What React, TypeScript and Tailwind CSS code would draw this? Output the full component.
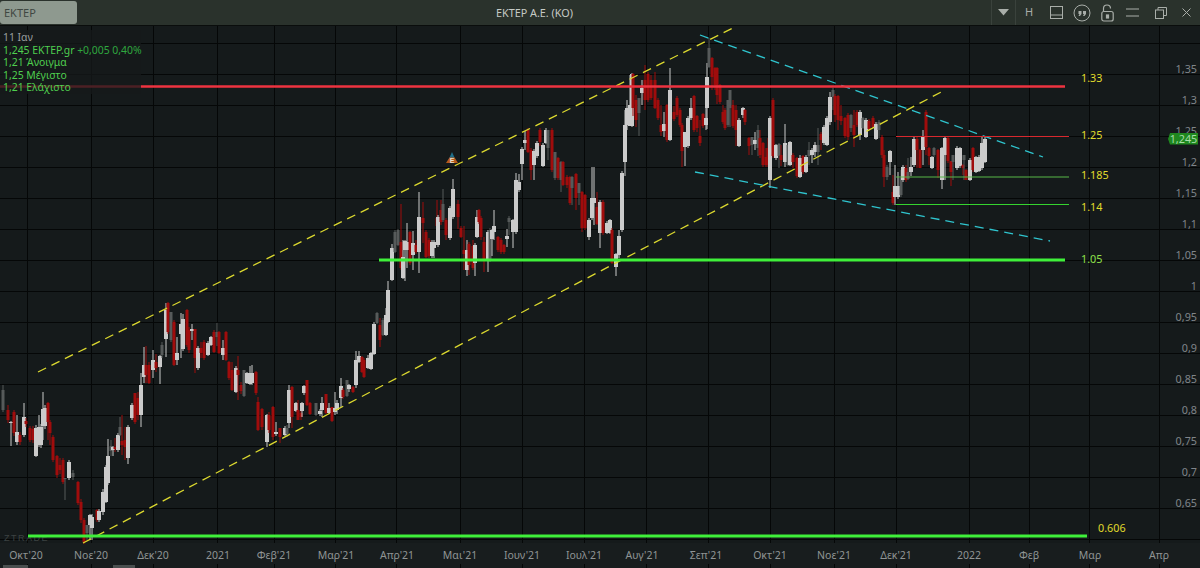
import React from "react";

type Candle = [number, number, number, "w" | "r" | "g", number?, number?];

// [x, body top, body bottom, colour, wick high, wick low], all in chart pixels
const candles: Candle[] = [
  [3, 390, 410, "g", 385, 412], [8, 410, 420, "r", 405, 423], [11, 422, 423, "w", 421, 446], [14, 412, 433, "r", 410, 436],
  [17, 432, 442, "w", 415, 445], [20, 435, 442, "r"], [24, 417, 435, "w", 403, 437], [26, 421, 424, "r"], [30, 428, 440, "r", 426, 442],
  [33, 429, 440, "r"], [36, 428, 456, "w", 425, 457], [39, 427, 445, "w", 415, 447], [41, 427, 445, "w"], [43, 409, 426, "w", 392, 440],
  [45, 408, 426, "w"], [48, 403, 422, "r", 402, 440], [50, 422, 433, "r", 420, 445], [53, 437, 460, "r", 435, 462], [57, 456, 475, "r", 455, 478],
  [60, 465, 470, "r", 458, 474], [63, 460, 482, "r", 458, 484], [65, 478, 479, "g", 478, 500], [69, 462, 478, "w", 460, 480], [73, 473, 477, "g"],
  [78, 482, 503, "r", 481, 505], [81, 502, 520, "r"], [84, 520, 542, "r", 518, 544], [87, 525, 533, "g", 525, 540], [90, 515, 525, "w", 514, 540],
  [92, 517, 528, "w", 514, 540], [97, 510, 520, "r", 509, 522], [99, 511, 520, "w", 509, 522], [103, 492, 512, "w"], [106, 467, 502, "w", 465, 503],
  [108, 456, 483, "w", 439, 485], [111, 446, 451, "g", 440, 456], [113, 447, 450, "w", 446, 456], [115, 447, 449, "r", 438, 452], [118, 435, 450, "w", 433, 452],
  [120, 427, 435, "g", 417, 436], [122, 441, 445, "r", 415, 455], [125, 440, 447, "r", 427, 460], [128, 427, 458, "w", 425, 464], [132, 405, 418, "w", 403, 420],
  [135, 393, 422, "r", 393, 424], [138, 398, 415, "r", 392, 420], [141, 385, 415, "w", 373, 427], [144, 365, 377, "w", 347, 383], [146, 365, 375, "r", 346, 383],
  [149, 365, 383, "r", 362, 384], [153, 360, 370, "w", 350, 378], [156, 362, 368, "r", 354, 372], [160, 356, 367, "w", 355, 384], [162, 345, 355, "g"],
  [166, 310, 339, "w", 303, 357], [168, 303, 332, "r", 302, 334], [171, 312, 340, "g", 312, 342], [174, 322, 365, "r", 320, 366], [177, 353, 360, "w", 337, 365],
  [181, 324, 334, "w", 313, 358], [183, 319, 349, "w", 314, 351], [187, 310, 345, "r", 309, 347], [189, 330, 350, "r"], [192, 329, 331, "w", 324, 340],
  [195, 329, 358, "r", 329, 373], [198, 348, 368, "w", 346, 370], [201, 348, 353, "r", 342, 358], [204, 342, 358, "r", 340, 360], [208, 343, 355, "w", 341, 356],
  [211, 337, 345, "w", 336, 346], [214, 332, 352, "r", 330, 353], [217, 332, 337, "g", 323, 346], [219, 332, 353, "r", 331, 354], [223, 348, 355, "w", 340, 360],
  [226, 332, 360, "r", 331, 361], [229, 362, 378, "r", 361, 380], [232, 370, 390, "r", 362, 391], [236, 368, 392, "w", 366, 393], [238, 370, 375, "r", 356, 400],
  [241, 385, 391, "r"], [244, 370, 396, "g", 370, 397], [247, 373, 383, "w", 372, 384], [250, 373, 384, "w", 366, 385], [252, 373, 383, "w", 365, 385],
  [256, 372, 393, "r", 371, 395], [258, 402, 430, "r", 397, 431], [262, 409, 427, "r", 408, 430], [267, 415, 442, "w", 414, 447], [269, 415, 430, "r"],
  [273, 407, 437, "r", 406, 440], [276, 432, 434, "w", 422, 436], [280, 428, 437, "r", 428, 443], [285, 428, 435, "w", 426, 436], [287, 428, 434, "g"],
  [289, 390, 423, "w", 385, 428], [292, 387, 417, "r", 386, 428], [296, 403, 411, "w", 402, 412], [298, 410, 420, "r", 400, 420], [301, 413, 417, "r"],
  [302, 403, 411, "w", 402, 417], [304, 386, 393, "w", 385, 395], [307, 380, 405, "r", 380, 406], [310, 403, 414, "r", 402, 415], [316, 403, 415, "g", 403, 416],
  [320, 411, 414, "w", 409, 416], [322, 403, 410, "w", 397, 417], [326, 394, 413, "r", 394, 414], [329, 408, 413, "w", 403, 414], [332, 407, 421, "r", 407, 422],
  [335, 408, 412, "w", 392, 415], [337, 403, 410, "w", 400, 414], [341, 386, 398, "w", 378, 407], [343, 390, 397, "r", 388, 399], [347, 380, 396, "g", 380, 397],
  [349, 385, 389, "w", 384, 392], [353, 387, 392, "r", 386, 393], [356, 360, 385, "w", 351, 388], [359, 356, 362, "w", 351, 363], [362, 357, 372, "r", 356, 373],
  [364, 360, 377, "r", 358, 378], [368, 358, 368, "w", 355, 369], [371, 353, 369, "w", 352, 370], [374, 324, 354, "w", 322, 355], [377, 313, 323, "g", 312, 324],
  [380, 325, 340, "r", 318, 347], [383, 320, 335, "g", 318, 336], [386, 315, 335, "w", 308, 336], [388, 290, 322, "w", 281, 323], [392, 248, 280, "w", 244, 281],
  [395, 232, 252, "g", 230, 253], [398, 230, 245, "g", 229, 246], [401, 242, 268, "r", 204, 270], [403, 257, 278, "w", 240, 279], [405, 241, 250, "w", 240, 281],
  [407, 242, 250, "w", 223, 268], [410, 232, 263, "r", 231, 265], [413, 243, 255, "w", 231, 270], [416, 245, 252, "r", 240, 254], [419, 217, 252, "w", 192, 273],
  [423, 218, 223, "r", 202, 243], [426, 232, 257, "r", 230, 258], [429, 240, 256, "r", 238, 258], [432, 242, 256, "w", 240, 258], [434, 242, 248, "w", 240, 258],
  [437, 218, 226, "r", 200, 240], [438, 217, 245, "w", 215, 247], [441, 210, 222, "r", 200, 225], [443, 204, 220, "g", 189, 222], [446, 220, 235, "r", 218, 240],
  [450, 208, 238, "w", 206, 240], [453, 189, 217, "w", 179, 219], [458, 204, 217, "r", 200, 229], [461, 228, 237, "r", 226, 238], [464, 250, 254, "r", 226, 270],
  [467, 250, 270, "w", 240, 276], [469, 244, 265, "r", 242, 275], [473, 246, 268, "r", 240, 270], [475, 245, 263, "w", 243, 276], [477, 217, 237, "w", 210, 238],
  [479, 210, 222, "r", 209, 224], [481, 218, 237, "r", 216, 240], [484, 242, 260, "r", 237, 272], [488, 232, 260, "w", 230, 272], [490, 230, 260, "g", 228, 262],
  [492, 230, 239, "w", 229, 256], [494, 226, 232, "w", 210, 240], [498, 237, 250, "r", 236, 252], [501, 240, 252, "r", 238, 254], [504, 245, 252, "r", 244, 254],
  [507, 236, 239, "w", 229, 247], [509, 218, 222, "g", 216, 235], [513, 220, 232, "w", 219, 248], [516, 180, 232, "w", 173, 234], [519, 182, 190, "w", 174, 192],
  [522, 149, 164, "w", 147, 180], [525, 140, 143, "w", 131, 150], [528, 130, 152, "r", 128, 153], [531, 150, 170, "r", 148, 180], [534, 151, 165, "w", 149, 180],
  [537, 143, 156, "w", 141, 158], [540, 130, 142, "r", 128, 146], [543, 145, 166, "w", 143, 167], [546, 130, 143, "w", 128, 144], [548, 130, 148, "g", 130, 160],
  [552, 130, 170, "r", 128, 172], [555, 152, 178, "g", 152, 180], [558, 158, 178, "r", 157, 180], [561, 162, 180, "g", 161, 192], [563, 162, 185, "r", 161, 186],
  [567, 177, 185, "r", 175, 188], [570, 177, 203, "r", 176, 205], [572, 177, 188, "g", 176, 205], [576, 174, 198, "r", 173, 210], [579, 183, 193, "g", 183, 205],
  [582, 192, 228, "r", 191, 232], [585, 195, 228, "r", 194, 230], [589, 220, 237, "w", 218, 240], [592, 198, 218, "w", 167, 220], [594, 198, 203, "w", 167, 225],
  [597, 207, 224, "r", 192, 225], [600, 202, 233, "w", 200, 248], [603, 202, 233, "r", 200, 235], [607, 223, 233, "w", 221, 234], [610, 220, 233, "w", 219, 234],
  [612, 230, 263, "r", 228, 264], [616, 254, 267, "w", 253, 276], [619, 236, 255, "w", 230, 258], [622, 173, 230, "w", 171, 232], [625, 125, 162, "w", 110, 176],
  [627, 108, 125, "w", 100, 130], [630, 105, 126, "w", 75, 126], [632, 74, 126, "w", 73, 127], [633, 74, 108, "r", 73, 116], [636, 100, 120, "r", 95, 127],
  [639, 98, 113, "g", 98, 136], [642, 88, 93, "w", 80, 105], [645, 80, 100, "r", 65, 110], [648, 74, 100, "r", 72, 102], [651, 80, 98, "r", 75, 100],
  [655, 80, 108, "r", 72, 109], [658, 100, 118, "r", 98, 120], [661, 125, 132, "r", 105, 136], [664, 124, 131, "w", 112, 137], [667, 105, 140, "r", 104, 142],
  [670, 90, 140, "w", 68, 141], [674, 112, 119, "r", 106, 121], [677, 98, 115, "r", 96, 117], [680, 110, 125, "r", 108, 127], [682, 125, 151, "r", 123, 167],
  [685, 132, 147, "w", 132, 166], [688, 118, 146, "w", 116, 148], [691, 108, 118, "w", 98, 120], [694, 96, 130, "r", 95, 132], [697, 116, 128, "r", 115, 132],
  [700, 136, 143, "r", 120, 146], [703, 114, 126, "r", 113, 128], [706, 118, 125, "w", 98, 130], [707, 77, 108, "w", 63, 129], [709, 48, 67, "g", 38, 68],
  [712, 58, 77, "r", 57, 90], [715, 68, 85, "r", 67, 90], [717, 68, 95, "r", 67, 104], [720, 85, 102, "r", 84, 104], [723, 112, 122, "r", 105, 124],
  [725, 110, 128, "r", 108, 130], [728, 100, 125, "g", 100, 127], [730, 90, 108, "g", 90, 127], [733, 105, 126, "r", 100, 128], [736, 110, 130, "r", 105, 146],
  [739, 120, 146, "w", 118, 147], [743, 108, 115, "w", 107, 118], [745, 110, 122, "r", 109, 125], [749, 138, 146, "r", 137, 155], [752, 137, 145, "g", 137, 155],
  [755, 140, 144, "w", 132, 150], [758, 130, 148, "g", 125, 156], [760, 138, 155, "r", 130, 158], [763, 143, 165, "r", 142, 167], [766, 157, 165, "r", 148, 167],
  [768, 148, 165, "r", 138, 167], [770, 118, 180, "w", 116, 188], [773, 100, 156, "r", 98, 158], [776, 145, 158, "w", 144, 160], [779, 144, 156, "g", 143, 168],
  [781, 155, 160, "r", 145, 166], [785, 143, 162, "w", 124, 167], [788, 145, 165, "g", 143, 166], [790, 142, 165, "w", 141, 166], [793, 155, 162, "r", 153, 168],
  [797, 158, 176, "r", 157, 178], [800, 158, 177, "w", 155, 178], [803, 156, 172, "r", 155, 174], [806, 157, 172, "w", 155, 173], [809, 150, 156, "g", 142, 165],
  [812, 150, 155, "w", 148, 163], [815, 145, 152, "w", 142, 157], [818, 145, 152, "g", 128, 165], [821, 134, 140, "r", 132, 150], [824, 127, 143, "w", 125, 145],
  [827, 118, 145, "w", 116, 146], [830, 97, 122, "w", 92, 125], [833, 90, 97, "g", 88, 110], [835, 96, 115, "r", 94, 122], [838, 96, 120, "r", 95, 130],
  [841, 116, 121, "r", 105, 125], [845, 118, 136, "r", 117, 138], [848, 115, 137, "r", 113, 140], [851, 115, 128, "g", 114, 132], [854, 125, 135, "r", 110, 147],
  [857, 112, 125, "r", 110, 127], [860, 112, 135, "w", 110, 140], [863, 118, 128, "g", 117, 129], [866, 120, 137, "w", 118, 138], [869, 121, 129, "r", 119, 130],
  [873, 118, 127, "r", 116, 128], [876, 124, 139, "w", 122, 140], [879, 122, 130, "g", 120, 138], [882, 137, 155, "r", 135, 158], [884, 155, 177, "r", 150, 187],
  [887, 167, 177, "g", 165, 180], [890, 151, 162, "w", 150, 175], [893, 192, 203, "r", 175, 205], [895, 186, 197, "w", 165, 205], [898, 186, 197, "w", 172, 199],
  [901, 178, 195, "g", 170, 197], [903, 167, 180, "w", 165, 182], [906, 168, 180, "r", 165, 182], [908, 172, 179, "g", 158, 180], [911, 167, 172, "w", 157, 176],
  [914, 139, 165, "w", 137, 167], [917, 139, 150, "r", 137, 168], [920, 150, 168, "r", 149, 168], [923, 137, 150, "w", 130, 165], [926, 112, 147, "r", 110, 155],
  [929, 148, 156, "r", 147, 165], [932, 157, 168, "w", 156, 169], [934, 148, 155, "g", 147, 157], [938, 150, 170, "r", 149, 178], [942, 148, 180, "w", 147, 189],
  [945, 138, 155, "w", 136, 180], [948, 138, 161, "r", 137, 163], [951, 161, 172, "r", 161, 186], [953, 155, 162, "g", 155, 180], [957, 148, 168, "w", 146, 170],
  [960, 148, 166, "w", 147, 168], [963, 165, 168, "r", 164, 175], [964, 155, 160, "g", 155, 180], [966, 170, 180, "r", 169, 180], [970, 160, 180, "w", 158, 181],
  [973, 148, 170, "r", 147, 172], [976, 157, 172, "w", 156, 173], [979, 157, 171, "w", 155, 172], [982, 143, 168, "w", 137, 170], [985, 139, 162, "w", 137, 163],
];

const candleColor = { w: "#cbcbcb", r: "#a00c0c", g: "#565a5a" };

const priceLabels = ["1,35", "1,3", "1,25", "1,2", "1,15", "1,1", "1,05", "1", "0,95", "0,9", "0,85", "0,8", "0,75", "0,7", "0,65"];
const gridY = [43, 74, 105, 136, 167, 198, 229, 260, 291, 322, 353, 384, 415, 446, 477, 508, 539];
const gridX = [27, 91, 153, 217, 274, 335, 396, 460, 522, 584, 646, 708, 770, 834, 896, 969, 1029, 1089, 1159];
const monthLabels: [number, string][] = [
  [26, "Οκτ'20"], [91, "Νοε'20"], [153, "Δεκ'20"], [218, "2021"], [274, "Φεβ'21"], [336, "Μαρ'21"], [397, "Απρ'21"], [460, "Μαι'21"],
  [522, "Ιουν'21"], [584, "Ιουλ'21"], [642, "Αυγ'21"], [706, "Σεπ'21"], [770, "Οκτ'21"], [834, "Νοε'21"], [896, "Δεκ'21"], [969, "2022"],
  [1029, "Φεβ"], [1090, "Μαρ"], [1159, "Απρ"],
];

function CandleMark({ c }: { c: Candle }) {
  const [x, top, bottom, kind, high, low] = c;
  const color = candleColor[kind];
  const width = kind === "w" ? 4 : 3;
  return (
    <g>
      <line x1={x} x2={x} y1={high ?? top - 3} y2={low ?? bottom + 3} stroke={color} strokeWidth={1} />
      <rect x={x - width / 2} y={top} width={width} height={bottom - top} fill={color} />
    </g>
  );
}

function Chart() {
  return (
    <svg width={1200} height={542} viewBox="0 26 1200 542" className="block">
      {gridY.map((y) => (
        <line key={y} x1={0} x2={1200} y1={y + 0.5} y2={y + 0.5} stroke="#050707" strokeWidth={1} />
      ))}
      {gridX.map((x) => (
        <line key={x} x1={x + 0.5} x2={x + 0.5} y1={26} y2={544} stroke="#050707" strokeWidth={1} />
      ))}
      <rect x={0} y={543} width={1200} height={25} fill="#181d1e" />

      <text x={4} y={541} fontSize={9} letterSpacing={1.5} fill="#3c4242" fontFamily="Liberation Sans, sans-serif">ZTRADE</text>

      {candles.map((c) => (
        <CandleMark key={c[0]} c={c} />
      ))}

      <g strokeWidth={1.3} strokeDasharray="9 6" fill="none">
        <line x1={38} y1={372} x2={735} y2={27} stroke="#dcd92f" />
        <line x1={83} y1={543} x2={945} y2={90} stroke="#dcd92f" />
        <line x1={700} y1={35} x2={1043} y2={157} stroke="#2fc5cf" />
        <line x1={695} y1={172} x2={1050} y2={241} stroke="#2fc5cf" />
      </g>

      <line x1={0} x2={1065} y1={86.5} y2={86.5} stroke="#ee3340" strokeWidth={2.5} />
      <line x1={896} x2={1069} y1={136.5} y2={136.5} stroke="#d8282e" strokeWidth={1} />
      <line x1={896} x2={1069} y1={177} y2={177} stroke="#58b848" strokeWidth={1} />
      <line x1={896} x2={1069} y1={204.5} y2={204.5} stroke="#35d42f" strokeWidth={1} />
      <line x1={379} x2={1065} y1={260} y2={260} stroke="#3ff03a" strokeWidth={3} />
      <line x1={28} x2={1087} y1={536} y2={536} stroke="#3ff03a" strokeWidth={3} />

      <g fontSize={10.8} fontFamily="Noto Sans, sans-serif">
        <text x={1081} y={82} fill="#e0dc2c">1.33</text>
        <text x={1081} y={139} fill="#e0dc2c">1.25</text>
        <text x={1081} y={179} fill="#e0dc2c">1.185</text>
        <text x={1081} y={211} fill="#e0dc2c">1.14</text>
        <text x={1081} y={263} fill="#8fe04a">1.05</text>
        <text x={1098} y={532} fill="#e0dc2c">0.606</text>
      </g>

      <g fontSize={10.8} fontFamily="Noto Sans, sans-serif" fill="#80858a" textAnchor="end">
        {priceLabels.map((label, i) => (
          <text key={label} x={1197} y={gridY[i + 1] - 1}>{label}</text>
        ))}
      </g>

      <g fontSize={10.5} fontFamily="Noto Sans, sans-serif" fill="#8f9494" textAnchor="middle">
        {monthLabels.map(([x, label]) => (
          <text key={label + x} x={x} y={559}>{label}</text>
        ))}
      </g>

      {gridX.map((x) => (
        <line key={x} x1={x + 0.5} x2={x + 0.5} y1={564} y2={568} stroke="#050707" strokeWidth={1} />
      ))}
      <rect x={3} y={565} width={25} height={3} fill="#4a4f4f" />
      <rect x={113} y={565} width={22} height={3} fill="#4a4f4f" />

      <polygon points="1170,133 1198,133 1198,144.5 1170,144.5 1168,139" fill="#1f881f" />
      <text x={1183.5} y={143} fontSize={10.8} fontFamily="Noto Sans, sans-serif" fill="#a8dca8" textAnchor="middle">1,245</text>

      <polygon points="452,152 457,163 447,163" fill="#1f6f8a" />
      <polygon points="449.5,157.5 454.5,157.5 458,163 446,163" fill="#b5581a" />
      <text x={452} y={163} fontSize={7} fontWeight={700} fontFamily="Liberation Sans, sans-serif" fill="#e8e0d0" textAnchor="middle">E</text>
    </svg>
  );
}

function TopBar() {
  return (
    <div className="flex h-[26px] items-stretch bg-[#2a322c] border-b border-[#0a0d0c]">
      <div className="mt-px mb-px w-[77px] rounded-[3px] bg-[#8e998f] pl-[4px] text-[11px] leading-[24px] text-[#3f4742]">EKTEP</div>
      <div className="flex-1 pl-[419px] text-[10.8px] leading-[26px] text-[#c6cac6]">ΕΚΤΕΡ Α.Ε. (ΚΟ)</div>
      <div className="flex w-[209px] items-center text-[#a9aea9]">
        <div className="flex h-full w-[25px] items-center justify-center border-x border-[#3a423c]">
          <svg width={11} height={7} viewBox="0 0 11 7"><polygon points="0,0 11,0 5.5,6.5" fill="#a9aea9" /></svg>
        </div>
        <div className="w-[26px] text-center text-[11px]">H</div>
        <svg className="ml-[8px]" width={13} height={13} viewBox="0 0 13 13" fill="none" stroke="currentColor">
          <rect x={0.5} y={0.5} width={12} height={12} />
          <line x1={0.5} x2={12.5} y1={9} y2={9} />
        </svg>
        <svg className="ml-[10px]" width={18} height={18} viewBox="0 0 18 18" fill="none" stroke="currentColor">
          <circle cx={9} cy={9} r={8} />
          <path d="M5.5 7h3v3l-1.5 2H5.5l1-2h-1zM10 7h3v3l-1.5 2H10l1-2h-1z" fill="currentColor" stroke="none" />
        </svg>
        <svg className="ml-[10px]" width={13} height={18} viewBox="0 0 13 18" fill="none" stroke="currentColor" strokeWidth={1.2}>
          <path d="M2.5 7V4.5a3.5 3.5 0 0 1 7 0" />
          <rect x={0.8} y={7.5} width={11.4} height={9.5} rx={2} />
          <rect x={5.5} y={11} width={2} height={3} fill="currentColor" />
        </svg>
        <svg className="ml-[12px]" width={13} height={9} viewBox="0 0 13 9" stroke="currentColor">
          <line x1={0} x2={13} y1={1} y2={1} />
          <line x1={0} x2={13} y1={8} y2={8} />
        </svg>
        <svg className="ml-[16px]" width={12} height={12} viewBox="0 0 12 12" fill="none" stroke="currentColor">
          <rect x={0.5} y={3} width={8} height={8.5} />
          <path d="M3 3V0.5h8.5V8.5H8.5" />
        </svg>
        <svg className="ml-[15px]" width={9} height={9} viewBox="0 0 9 9" stroke="currentColor">
          <line x1={0.5} x2={8.5} y1={0.5} y2={8.5} />
          <line x1={8.5} x2={0.5} y1={0.5} y2={8.5} />
        </svg>
      </div>
    </div>
  );
}

export default function App() {
  return (
    <div className="flex h-[568px] w-[1200px] flex-col overflow-hidden bg-[#151a1b] font-['Noto_Sans',sans-serif]">
      <TopBar />
      <div className="relative flex-1">
        <Chart />
        <div className="absolute left-0 top-[4px] w-[141px] bg-[#151a1b]/75 pl-[3px] pt-[1px] text-[10.4px] leading-[12.5px] text-[#4fcf4f]">
          <div className="text-[#9a9f9f]">11 Ιαν</div>
          <div className="whitespace-nowrap">1,245 EKTEP.gr <span className="text-[#2fa83f]">+0,005 0,40%</span></div>
          <div>1,21 Άνοιγμα</div>
          <div>1,25 Μέγιστο</div>
          <div>1,21 Ελάχιστο</div>
        </div>
      </div>
    </div>
  );
}
